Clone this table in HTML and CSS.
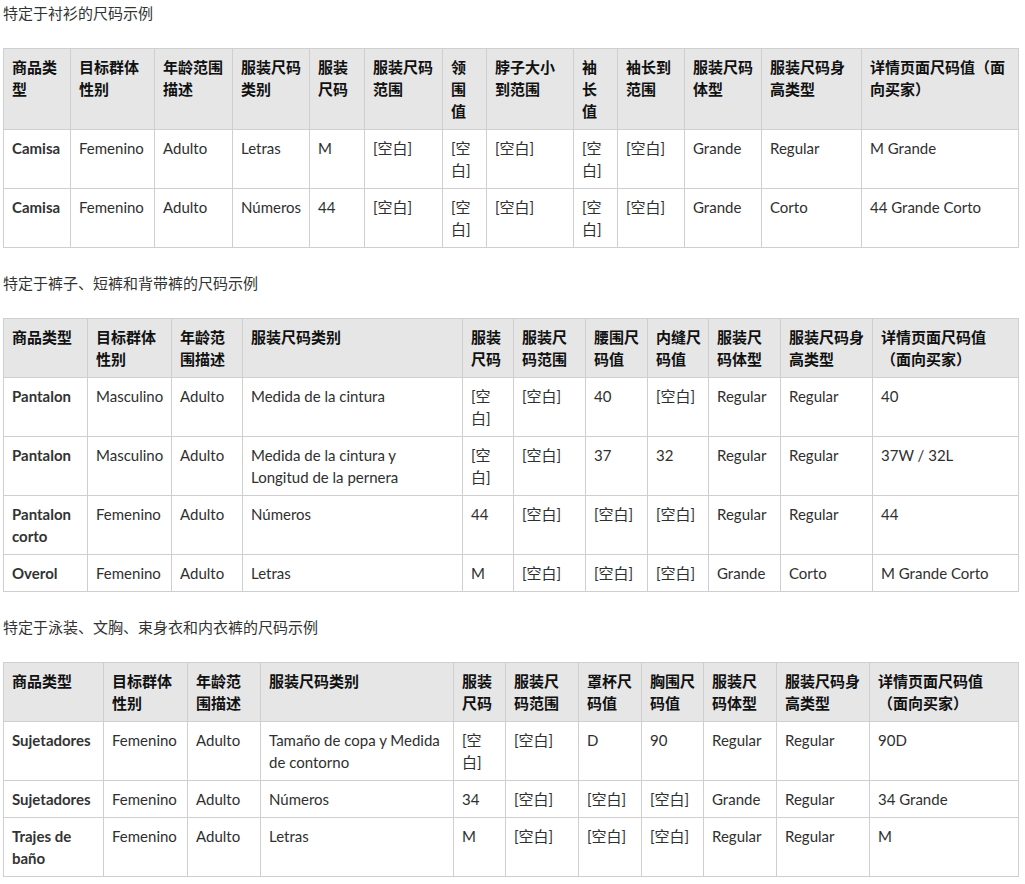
FILE: index.html
```html
<!DOCTYPE html>
<html lang="zh">
<head>
<meta charset="utf-8">
<title>尺码示例</title>
<link rel="stylesheet" href="styles.css">
</head>
<body>
<div class="page">
  <p class="heading">特定于衬衫的尺码示例</p>
  <table class="size-table t1">
    <colgroup><col><col><col><col><col><col><col><col><col><col><col><col><col></colgroup>
    <thead>
      <tr><th>商品类型</th><th>目标群体性别</th><th>年龄范围描述</th><th>服装尺码类别</th><th>服装尺码</th><th>服装尺码范围</th><th>领围值</th><th>脖子大小到范围</th><th>袖长值</th><th>袖长到范围</th><th>服装尺码体型</th><th>服装尺码身高类型</th><th>详情页面尺码值（面向买家）</th></tr>
    </thead>
    <tbody>
      <tr><td class="pt">Camisa</td><td>Femenino</td><td>Adulto</td><td>Letras</td><td>M</td><td>[空白]</td><td>[空白]</td><td>[空白]</td><td>[空白]</td><td>[空白]</td><td>Grande</td><td>Regular</td><td>M Grande</td></tr>
      <tr><td class="pt">Camisa</td><td>Femenino</td><td>Adulto</td><td>Números</td><td>44</td><td>[空白]</td><td>[空白]</td><td>[空白]</td><td>[空白]</td><td>[空白]</td><td>Grande</td><td>Corto</td><td>44 Grande Corto</td></tr>
    </tbody>
  </table>

  <p class="heading">特定于裤子、短裤和背带裤的尺码示例</p>
  <table class="size-table t2">
    <colgroup><col><col><col><col><col><col><col><col><col><col><col></colgroup>
    <thead>
      <tr><th>商品类型</th><th>目标群体性别</th><th>年龄范围描述</th><th>服装尺码类别</th><th>服装尺码</th><th>服装尺码范围</th><th>腰围尺码值</th><th>内缝尺码值</th><th>服装尺码体型</th><th>服装尺码身高类型</th><th>详情页面尺码值（面向买家）</th></tr>
    </thead>
    <tbody>
      <tr><td class="pt">Pantalon</td><td>Masculino</td><td>Adulto</td><td>Medida de la cintura</td><td>[空白]</td><td>[空白]</td><td>40</td><td>[空白]</td><td>Regular</td><td>Regular</td><td>40</td></tr>
      <tr><td class="pt">Pantalon</td><td>Masculino</td><td>Adulto</td><td>Medida de la cintura y Longitud de la pernera</td><td>[空白]</td><td>[空白]</td><td>37</td><td>32</td><td>Regular</td><td>Regular</td><td>37W / 32L</td></tr>
      <tr><td class="pt">Pantalon corto</td><td>Femenino</td><td>Adulto</td><td>Números</td><td>44</td><td>[空白]</td><td>[空白]</td><td>[空白]</td><td>Regular</td><td>Regular</td><td>44</td></tr>
      <tr><td class="pt">Overol</td><td>Femenino</td><td>Adulto</td><td>Letras</td><td>M</td><td>[空白]</td><td>[空白]</td><td>[空白]</td><td>Grande</td><td>Corto</td><td>M Grande Corto</td></tr>
    </tbody>
  </table>

  <p class="heading">特定于泳装、文胸、束身衣和内衣裤的尺码示例</p>
  <table class="size-table t3">
    <colgroup><col><col><col><col><col><col><col><col><col><col><col></colgroup>
    <thead>
      <tr><th>商品类型</th><th>目标群体性别</th><th>年龄范围描述</th><th>服装尺码类别</th><th>服装尺码</th><th>服装尺码范围</th><th>罩杯尺码值</th><th>胸围尺码值</th><th>服装尺码体型</th><th>服装尺码身高类型</th><th>详情页面尺码值（面向买家）</th></tr>
    </thead>
    <tbody>
      <tr><td class="pt">Sujetadores</td><td>Femenino</td><td>Adulto</td><td>Tamaño de copa y Medida de contorno</td><td>[空白]</td><td>[空白]</td><td>D</td><td>90</td><td>Regular</td><td>Regular</td><td>90D</td></tr>
      <tr><td class="pt">Sujetadores</td><td>Femenino</td><td>Adulto</td><td>Números</td><td>34</td><td>[空白]</td><td>[空白]</td><td>[空白]</td><td>Grande</td><td>Regular</td><td>34 Grande</td></tr>
      <tr><td class="pt">Trajes de baño</td><td>Femenino</td><td>Adulto</td><td>Letras</td><td>M</td><td>[空白]</td><td>[空白]</td><td>[空白]</td><td>Regular</td><td>Regular</td><td>M</td></tr>
    </tbody>
  </table>
</div>
</body>
</html>
```

FILE: styles.css
```css
html, body {
  margin: 0;
  padding: 0;
  background: #ffffff;
}

body {
  font-family: "Lato", "Noto Sans CJK SC", sans-serif;
  font-size: 15px;
  line-height: 22px;
  color: #2f2f2f;
}

.page {
  padding: 2px 6px 0 3px;
}

.heading {
  margin: 0 0 24px;
  color: #333333;
}

.size-table {
  width: 1016px;
  table-layout: fixed;
  border-collapse: collapse;
  margin: 0 0 24px;
}

.size-table th,
.size-table td {
  border: 1px solid #cfcfcf;
  padding: 7px 6px 7px 8px;
  text-align: left;
  vertical-align: top;
}

.size-table th {
  background: #e6e6e6;
  color: #111111;
  font-weight: 700;
}

.size-table td.pt {
  font-weight: 700;
  color: #333333;
}

/* Table 1 column widths */
.t1 col:nth-child(1) { width: 67px; }
.t1 col:nth-child(2) { width: 84px; }
.t1 col:nth-child(3) { width: 78px; }
.t1 col:nth-child(4) { width: 77px; }
.t1 col:nth-child(5) { width: 55px; }
.t1 col:nth-child(6) { width: 78px; }
.t1 col:nth-child(7) { width: 44px; }
.t1 col:nth-child(8) { width: 87px; }
.t1 col:nth-child(9) { width: 44px; }
.t1 col:nth-child(10) { width: 67px; }
.t1 col:nth-child(11) { width: 77px; }
.t1 col:nth-child(12) { width: 100px; }
.t1 col:nth-child(13) { width: 157px; }

/* Table 2 column widths */
.t2 col:nth-child(1) { width: 84px; }
.t2 col:nth-child(2) { width: 84px; }
.t2 col:nth-child(3) { width: 71px; }
.t2 col:nth-child(4) { width: 220px; }
.t2 col:nth-child(5) { width: 51px; }
.t2 col:nth-child(6) { width: 72px; }
.t2 col:nth-child(7) { width: 62px; }
.t2 col:nth-child(8) { width: 61px; }
.t2 col:nth-child(9) { width: 72px; }
.t2 col:nth-child(10) { width: 92px; }
.t2 col:nth-child(11) { width: 146px; }

/* Table 3 column widths */
.t3 col:nth-child(1) { width: 100px; }
.t3 col:nth-child(2) { width: 84px; }
.t3 col:nth-child(3) { width: 73px; }
.t3 col:nth-child(4) { width: 193px; }
.t3 col:nth-child(5) { width: 52px; }
.t3 col:nth-child(6) { width: 73px; }
.t3 col:nth-child(7) { width: 63px; }
.t3 col:nth-child(8) { width: 62px; }
.t3 col:nth-child(9) { width: 73px; }
.t3 col:nth-child(10) { width: 93px; }
.t3 col:nth-child(11) { width: 149px; }
```
